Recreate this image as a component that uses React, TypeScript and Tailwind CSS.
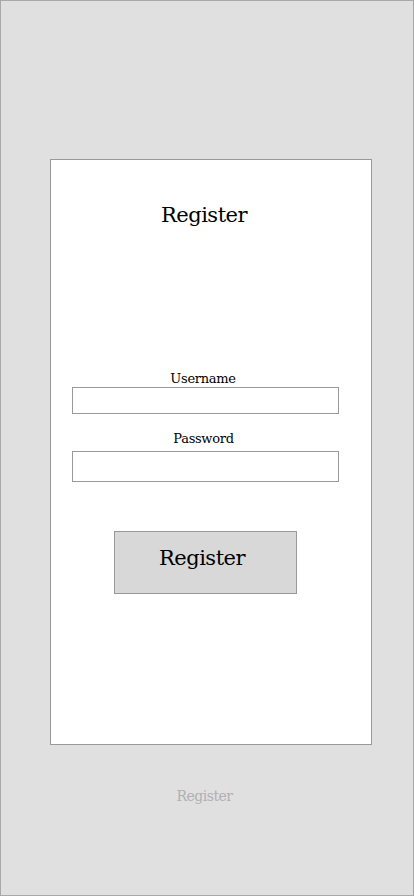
export default function App() {
  const font = { fontFamily: '"DejaVu Serif", "Liberation Serif", serif' };
  return (
    <div className="w-[414px] h-[896px] border border-[#a8a8a8] bg-[#e0e0e0] flex flex-col" style={font}>
      <div className="ml-[49px] mt-[158px] w-[322px] h-[586px] border border-[#999999] bg-white pl-[21px] pr-[32px] pt-[40px] flex flex-col">
        <h1 className="text-center text-[21px] leading-[30px] text-black tracking-[-0.5px] pr-[3px]">Register</h1>
        <label className="mt-[141px] text-center text-[13px] leading-[16px] text-black tracking-[-0.3px] pr-[5px]">Username</label>
        <input className="h-[27px] w-full border border-[#999999] bg-white outline-none" />
        <label className="mt-[17px] text-center text-[13px] leading-[16px] text-black tracking-[-0.3px] pr-[4px]">Password</label>
        <input type="password" className="mt-[4px] h-[31px] w-full border border-[#999999] bg-white outline-none" />
        <button className="mt-[49px] mx-auto w-[183px] h-[63px] border border-[#999999] bg-[#d8d8d8] text-[21px] text-black tracking-[-0.5px] pr-[7px] pb-[8px]">
          Register
        </button>
      </div>
      <div className="mt-[41px] text-center text-[14px] leading-[20px] text-[#b0b0b0] tracking-[-0.5px] pr-[5px]">Register</div>
    </div>
  );
}
